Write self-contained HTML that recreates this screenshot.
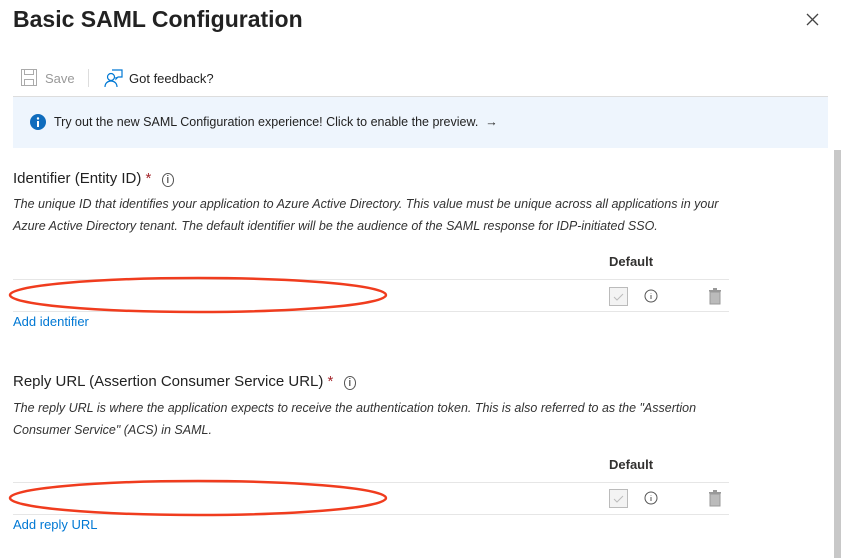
<!DOCTYPE html>
<html><head><style>
body{margin:0;width:841px;height:558px;background:#fff;font-family:"Liberation Sans",sans-serif;color:#323130;position:relative;overflow:hidden}
.a{position:absolute}
.t{font-size:23px;font-weight:600;left:13px;top:6px;color:#222}
.i{font-style:italic;font-size:12.5px;line-height:22px;color:#333}
.link{color:#0078d4;font-size:13px}
.h{font-size:15px;color:#222}
.line{height:1px;background:#e6e6e6}
</style></head><body>
<div class="a t">Basic SAML Configuration</div>
<svg class="a" style="left:806px;top:13px" width="13" height="13"><path d="M1 1l11 11M12 1L1 12" stroke="#444" stroke-width="1.3"/></svg>
<svg class="a" style="left:21px;top:69px" width="16" height="17"><rect x="0.5" y="0.5" width="15" height="16" fill="none" stroke="#aaa"/><rect x="3.5" y="0.5" width="9" height="5" fill="none" stroke="#aaa"/><rect x="3.5" y="10.5" width="9" height="6" fill="none" stroke="#aaa"/></svg>
<div class="a" style="left:45px;top:71px;font-size:13px;color:#999">Save</div>
<div class="a" style="left:88px;top:69px;width:1px;height:18px;background:#ddd"></div>
<svg class="a" style="left:104px;top:69px" width="19" height="18" fill="none" stroke="#0078d4" stroke-width="1.2"><circle cx="7" cy="8" r="3.5"/><path d="M1 18c0-4 3-6 6-6s6 2 6 6"/><path d="M8 1h10v7h-4l-2 2v-2"/></svg>
<div class="a" style="left:129px;top:71px;font-size:13px;color:#222">Got feedback?</div>
<div class="a" style="left:13px;top:96px;width:815px;height:51px;background:#eef5fd;border-top:1px solid #ddd"></div>
<svg class="a" style="left:30px;top:114px" width="16" height="16"><circle cx="8" cy="8" r="8" fill="#0f6cbd"/><rect x="7" y="7" width="2" height="6" fill="#fff"/><circle cx="8" cy="4.5" r="1.2" fill="#fff"/></svg>
<div class="a" style="left:54px;top:115px;font-size:12.5px;color:#222">Try out the new SAML Configuration experience! Click to enable the preview. &nbsp;→</div>
<div class="a" style="left:834px;top:150px;width:7px;height:408px;background:#c8c8c8"></div>

<div class="a h" style="left:13px;top:170px">Identifier (Entity ID) <span style="color:#a4262c">*</span> <span style="font-size:11px;border:1px solid #555;border-radius:50%;padding:0 4px;margin-left:6px">i</span></div>
<div class="a i" style="left:13px;top:193px;width:720px">The unique ID that identifies your application to Azure Active Directory. This value must be unique across all applications in your Azure Active Directory tenant. The default identifier will be the audience of the SAML response for IDP-initiated SSO.</div>
<div class="a" style="left:609px;top:254px;font-size:13px;font-weight:bold">Default</div>
<div class="a line" style="left:13px;top:279px;width:716px"></div>
<div class="a line" style="left:13px;top:311px;width:716px"></div>
<svg class="a" style="left:8px;top:276px" width="384" height="40"><ellipse cx="190" cy="19" rx="188" ry="17" fill="none" stroke="#f03c1e" stroke-width="2.5"/></svg>
<svg class="a" style="left:609px;top:287px" width="20" height="20"><rect x="0.5" y="0.5" width="18" height="18" fill="#f3f3f3" stroke="#bbb"/><path d="M5 10l3 3 6-6" fill="none" stroke="#bbb"/></svg>
<svg class="a" style="left:644px;top:289px" width="14" height="14"><circle cx="7" cy="7" r="6" fill="none" stroke="#555"/><path d="M7 6v4M7 4v.5" stroke="#555"/></svg>
<svg class="a" style="left:708px;top:288px" width="14" height="17"><rect x="1" y="2" width="12" height="1.5" fill="#999"/><rect x="5" y="0" width="4" height="2" fill="#999"/><rect x="2" y="4" width="10" height="12" fill="#bbb" stroke="#999"/></svg>
<div class="a link" style="left:13px;top:314px">Add identifier</div>

<div class="a h" style="left:13px;top:373px">Reply URL (Assertion Consumer Service URL) <span style="color:#a4262c">*</span> <span style="font-size:11px;border:1px solid #555;border-radius:50%;padding:0 4px;margin-left:6px">i</span></div>
<div class="a i" style="left:13px;top:397px;width:720px">The reply URL is where the application expects to receive the authentication token. This is also referred to as the "Assertion Consumer Service" (ACS) in SAML.</div>
<div class="a" style="left:609px;top:457px;font-size:13px;font-weight:bold">Default</div>
<div class="a line" style="left:13px;top:482px;width:716px"></div>
<div class="a line" style="left:13px;top:514px;width:716px"></div>
<svg class="a" style="left:8px;top:479px" width="384" height="40"><ellipse cx="190" cy="19" rx="188" ry="17" fill="none" stroke="#f03c1e" stroke-width="2.5"/></svg>
<svg class="a" style="left:609px;top:489px" width="20" height="20"><rect x="0.5" y="0.5" width="18" height="18" fill="#f3f3f3" stroke="#bbb"/><path d="M5 10l3 3 6-6" fill="none" stroke="#bbb"/></svg>
<svg class="a" style="left:644px;top:491px" width="14" height="14"><circle cx="7" cy="7" r="6" fill="none" stroke="#555"/><path d="M7 6v4M7 4v.5" stroke="#555"/></svg>
<svg class="a" style="left:708px;top:490px" width="14" height="17"><rect x="1" y="2" width="12" height="1.5" fill="#999"/><rect x="5" y="0" width="4" height="2" fill="#999"/><rect x="2" y="4" width="10" height="12" fill="#bbb" stroke="#999"/></svg>
<div class="a link" style="left:13px;top:517px">Add reply URL</div>
</body></html>
